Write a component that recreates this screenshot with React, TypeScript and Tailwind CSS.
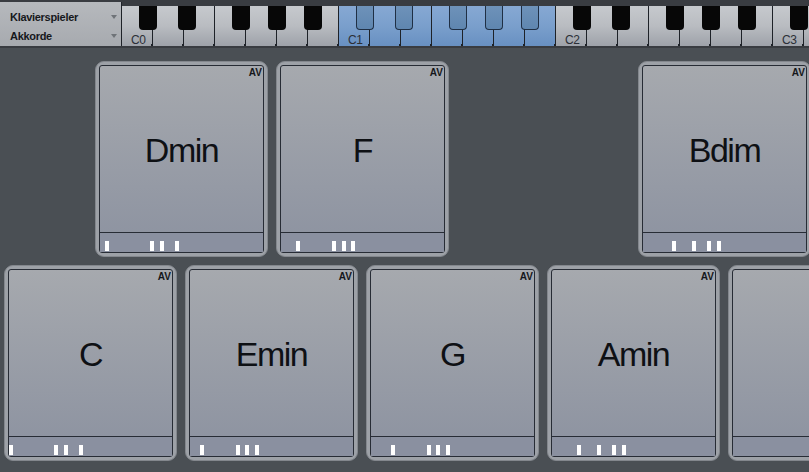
import React from "react";

type PadData = { name?: string; bars?: number[]; av?: boolean };

const BLACK_OFFSETS = [18, 57, 111, 147, 183];

function Keyboard() {
  const whites = Array.from({ length: 23 }, (_, k) => k);
  return (
    <div className="relative flex h-[40px] mt-[6px] flex-1 overflow-hidden">
      {whites.map((k) => {
        const octave = Math.floor(k / 7);
        const hi = octave === 1;
        return (
          <div
            key={k}
            className={
              "relative w-[31px] shrink-0 h-full border-r border-[#1e2228] " +
              (hi
                ? "bg-gradient-to-b from-[#86a8d3] via-[#7a9fcc] to-[#6890c2]"
                : "bg-gradient-to-b from-[#c6c9cd] via-[#b9bcc1] to-[#9ea2a9]")
            }
          >
            {k % 7 === 0 && (
              <span className="absolute left-[9px] top-[27px] text-[12px] leading-[14px] tracking-[-0.5px] text-[#2b2f36]">
                C{octave}
              </span>
            )}
            <span className="absolute right-[-2px] bottom-0 w-[3px] h-[2px] bg-[#1e2228]" />
          </div>
        );
      })}
      {[0, 1, 2, 3].map((o) =>
        BLACK_OFFSETS.map((x) => (
          <div
            key={o + "-" + x}
            className={
              "absolute top-0 w-[18px] h-[24px] rounded-b-[4px] " +
              (o === 1
                ? "bg-gradient-to-b from-[#6e92b9] to-[#5f86b0] border border-t-0 border-[#1f2f44]"
                : "bg-[#070707]")
            }
            style={{ left: o * 217 + x - 1 }}
          />
        ))
      )}
    </div>
  );
}

function TopBar() {
  return (
    <div className="flex h-[48px] bg-[#393c41] items-start">
      <div className="w-[122px] h-[44px] mt-[2px] bg-gradient-to-b from-[#b6b9bd] to-[#a7aaaf] flex flex-col pl-[10px] pr-[4px] pt-[5px] border-r border-[#1e2228]">
        {["Klavierspieler", "Akkorde"].map((t) => (
          <div key={t} className="flex items-center justify-between h-[20px]">
            <span className="text-[11px] font-bold tracking-[-0.3px] text-[#16181c]">{t}</span>
            <span className="w-0 h-0 border-l-[3px] border-r-[3px] border-t-[4px] border-l-transparent border-r-transparent border-t-[#6f7378]" />
          </div>
        ))}
      </div>
      <Keyboard />
    </div>
  );
}

function Pad({ name, bars = [], av = true }: PadData) {
  return (
    <div className="w-[173px] h-[196px] shrink-0 rounded-[9px] border border-[#83878d] bg-[#9da1a7] p-[3px]">
      <div className="h-full rounded-[3px] border border-[#272c35] bg-gradient-to-b from-[#a6a9ae] to-[#8c92a0] flex flex-col">
        <div className="relative flex-1 flex items-center justify-center">
          {av && (
            <span className="absolute top-[1px] right-[1px] text-[10px] leading-[12px] font-bold text-[#14161a]">AV</span>
          )}
          {name && (
            <span className="text-[34px] leading-none tracking-[-1.5px] text-[#0e1014] mt-[1px]">{name}</span>
          )}
        </div>
        <div className="relative h-[20px] border-t border-[#272c35] bg-[#8a90a0]">
          {bars.map((x, i) => (
            <span key={i} className="absolute bottom-[1px] w-[4px] h-[10px] bg-white" style={{ left: x }} />
          ))}
        </div>
      </div>
    </div>
  );
}

export default function App() {
  return (
    <div className="w-[809px] h-[472px] overflow-hidden bg-[#4a4f54] font-['Liberation_Sans',Arial,sans-serif]">
      <TopBar />
      <div className="flex flex-col gap-[8px] pt-[13px]">
        <div className="flex gap-[8px] ml-[95px]">
          <Pad name="Dmin" bars={[5, 50, 60, 75]} />
          <Pad name="F" bars={[15, 51, 61, 70]} />
          <div className="w-[173px] shrink-0" />
          <Pad name="Bdim" bars={[29, 49, 64, 74]} />
        </div>
        <div className="flex gap-[8px] ml-[4px]">
          <Pad name="C" bars={[0, 45, 55, 70]} />
          <Pad name="Emin" bars={[10, 46, 55, 65]} />
          <Pad name="G" bars={[20, 56, 65, 75]} />
          <Pad name="Amin" bars={[25, 45, 60, 70]} />
          <Pad av={false} />
        </div>
      </div>
    </div>
  );
}
